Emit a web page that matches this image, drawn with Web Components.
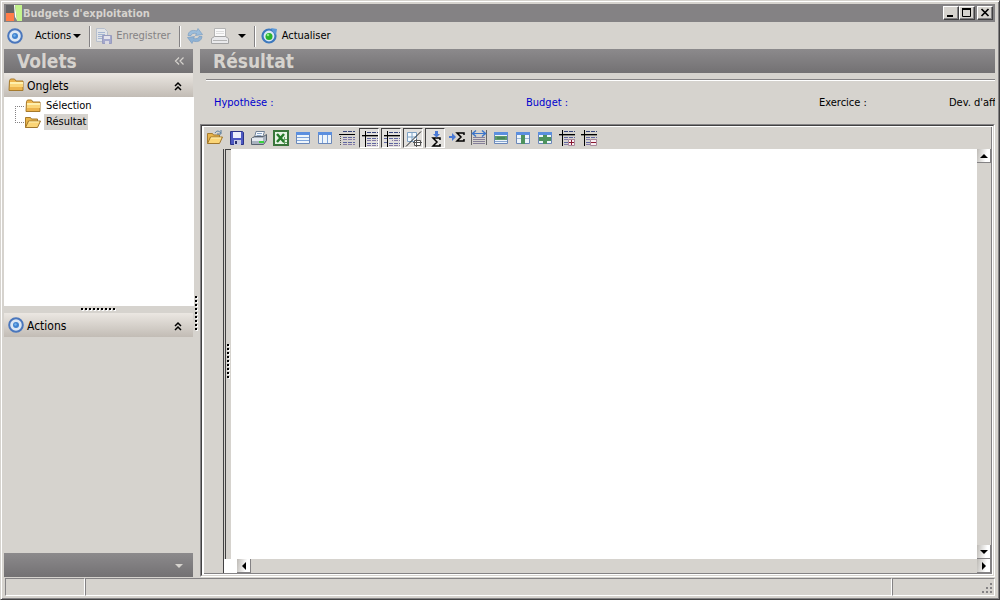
<!DOCTYPE html>
<html lang="fr">
<head>
<meta charset="utf-8">
<title>Budgets d'exploitation</title>
<style>
html, body { margin: 0; height: 100%; }
body { font: 11px/16px "DejaVu Sans Condensed", "DejaVu Sans", sans-serif; color: #000; background: #d6d3ce; overflow: hidden; }
</style>
</head>
<body>
<budget-app></budget-app>
<script>
const target = '<circle cx="8" cy="8" r="6.8" fill="#dce8f4" stroke="#4a76bc" stroke-width="2"/><circle cx="8" cy="8" r="3" fill="#3f82cf"/><circle cx="7.5" cy="7.5" r="1.2" fill="#73b4ec"/>';
const folder = '<path d="M1.500 3.500l1-1.500h4l1.500 2h7v9.500h-14z" fill="#edb44c" stroke="#a67a2c"/><path d="M2 5h13v2H2z" fill="#fff0ad"/><path d="M2 7h13v3H2z" fill="#fbd577"/>';
const openFolder = '<path d="M.5 13.500v-10h5l1 1.500h6v3" fill="#e9b54b" stroke="#a67a2c"/><path d="M.5 13.500l3-6.500h12l-3 6.500z" fill="#fbd577" stroke="#a1762c"/><path d="M4 8h10" stroke="#fff1b5"/>';
const rows = (x, w) => {
  let s = `<path d="M${x} 1.500h${w}" stroke="#39477c" stroke-dasharray="4 1"/>`;
  [7, 9, 12, 14].forEach((y, i) => { s += `<path d="M${x} ${y + .5}h${w}" stroke="${i % 2 ? '#857ba6' : '#5f66a0'}" stroke-dasharray="4 1"/>`; });
  return s;
};
const axes = '<path d="M0 4h16v1H0zM3 0h1v16H3z"/><path d="M0 5h16v1H0z" opacity=".35"/>';
const badge = '<path d="M9.500 9.500h6v6h-6z" fill="#f8eef2" stroke="#a88a9b"/>';
const table = '<path d="M1.500 2.500h13v11h-13z" fill="#eef5fb" stroke="#6a87b8"/><path d="M1 2h14v3H1z" fill="#5b8fdf"/>';
const sigma = (x, y) => `<path d="M${x + 8} ${y + 2}v-2h-7l4 4-4 4h7v-2" fill="none" stroke="#000" stroke-width="1.500"/>`;
const ICONS = {
  logo: '<path d="M0 0h8v8H0z" fill="#646466"/><path d="M0 8h8v8H0z" fill="#ff7d48"/><path d="M8 0h1l2 15-2-3z" fill="#fff"/><path d="M9 0h7v16h-5z" fill="#c4f48c"/>',
  target,
  folder,
  openFolder,
  save: '<path d="M1.500 1.500h12l1 1v12h-13z" fill="#4e59c2" stroke="#2c3488"/><path d="M4 2h8v6H4z" fill="#eef0fb"/><path d="M5 10h7v5H5z" fill="#c8cbe4"/><path d="M6 11h2v3H6z" fill="#29306f"/>',
  saveDoc: '<g opacity=".6"><path d="M.5.500h8l3 3v10H.5z" fill="#e9eef7" stroke="#a4b2cc"/><path d="M2 4.500h7M2 6.500h7M2 8.500h5M2 10.500h4" stroke="#84a2d4"/><path d="M6.500 7.500h9v8h-9z" fill="#838ccc" stroke="#7078b4"/><path d="M8 8h6v3H8z" fill="#eef"/><path d="M9 13h4v3H9z" fill="#dde"/></g>',
  sync: '<path d="M1 7.500C1.500 3 5 1.500 10 3l1-2.500 4.500 6-7 1 1-2C6.500 5 4.500 5.500 4 7.500z" fill="#9cbddb" stroke="#7197c0" stroke-width=".6"/><path d="M15 8.500c-.5 4.500-4 6-9 4.500l-1 2.500-4.500-6 7-1-1 2c3 .5 5 0 5.500-2z" fill="#8fb2d4" stroke="#7197c0" stroke-width=".6"/>',
  printerGray: '<path d="M3.500.500h11v9h-11z" fill="#fafafa" stroke="#b4b4b4"/><path d="M5 3.500h8M5 5.500h8" stroke="#ddd"/><path d="M.5 10.500l3-2h11l3 2v5H.5z" fill="#eaeaec" stroke="#a4a4a4"/><path d="M2 12.500h14" stroke="#b4b4b4"/>',
  refresh: '<circle cx="8" cy="8" r="6.500" fill="#dbe9f4" stroke="#3d78bd" stroke-width="2.200"/><path d="M10 0l6 1-1 6-3-3z" fill="#5c99d8"/><circle cx="8" cy="8.500" r="3.500" fill="#29b32c"/><circle cx="7" cy="7" r="1.300" fill="#8cec83"/>',
  open: openFolder + '<path d="M8 3c2-3 4-2 6 0M14 0v4h-4" fill="none" stroke="#557b9c"/>',
  printer: '<path d="M5 1.500h8.500l-2 6h-8z" fill="#f8fbff" stroke="#708196"/><path d="M6 3.500h5M5.500 5.500h5" stroke="#8ba4c4"/><path d="M.5 8.500l3-2h9l3-2v6l-3 4H.5z" fill="#a9b2bf" stroke="#59636f"/><path d="M1 8h11v3H1z" fill="#e5e9ef"/><path d="M8 11h5v2H8z" fill="#39d23d"/>',
  excel: '<path d="M1 1h14v14H1z" fill="#e7f3e5" stroke="#39753a" stroke-width="2"/><path d="M4 4l7 8M11 4l-7 8" stroke="#267b2a" stroke-width="2.500"/><path d="M10 9.500h4M10 12.500h4M11.500 7v7" stroke="#62a262"/>',
  rowsTable: table + '<path d="M2 7.500h12M2 10.500h12" stroke="#7da4dc"/>',
  colsTable: table + '<path d="M5.500 5v8M10.500 5v8" stroke="#7da4dc"/>',
  grid1: rows(4, 12) + '<path d="M0 4h16v1H0z"/><path d="M1.500 6v9" stroke="#555" stroke-dasharray="1 1"/>',
  grid2: rows(5, 11) + axes,
  grid3: rows(5, 11) + axes + '<path d="M0 7.500h3M0 11.500h3" stroke="#5f66a0"/><path d="M5 9h3v2H5z" fill="#e2e0dd"/>',
  diagonal: '<path d="M1.500 1.500h9v9h-9z" fill="#f4faff" stroke="#7fa2c4"/><path d="M6 2v8M2 6h8" stroke="#7fa2c4"/><path d="M8.500 9.500h6v5h-6z" fill="#fff" stroke="#555"/><path d="M7 11.500h9M10.500 8v8" stroke="#555"/><path d="M0 15.500L15 .5" stroke="#222"/>',
  sumDown: sigma(4, 7) + '<path d="M7 0h3v3h2L8.500 6.500 5 3h2z" fill="#4979d5"/>',
  sumRight: sigma(7, 3) + '<path d="M0 6h3V3l4 4-4 4V8H0z" fill="#4979d5"/>',
  fit: '<path d="M.5 0v15M15.500 0v15" stroke="#666"/><path d="M1 3.500h14" stroke="#3d76ca"/><path d="M5 .5l-3.500 3L5 6.500M11 .5l3.500 3-3.500 3" fill="none" stroke="#3d76ca" stroke-width="1.500"/><path d="M2 7.500h12M2 9.500h12M2 11.500h12M2 13.500h12" stroke="#857f98"/>',
  rowGreen: table + '<path d="M2 6h12v4H2z" fill="#5d9b6c"/><path d="M4 8h8" stroke="#39734a"/><path d="M2 11.500h12" stroke="#89a6d0"/>',
  colGreen: table + '<path d="M6 5h4v9H6z" fill="#4e925e"/><path d="M2 8.500h4M10 8.500h4" stroke="#9bb8d7"/>',
  crossGreen: table + '<path d="M6 5h4v9H6zM2 7h12v4H2z" fill="#4e925e"/>',
  gridPlus: rows(5, 11) + axes + badge + '<path d="M10 12.500h5M12.500 10v5" stroke="#8b1730"/>',
  gridMinus: rows(5, 11) + axes + badge + '<path d="M10 12.500h5" stroke="#8b1730"/>',
  chevUp: '<path d="M5 8l3-3 3 3M5 12l3-3 3 3" fill="none" stroke="#000" stroke-width="1.500"/>',
  chevLeft: '<path d="M8 4.500L4.500 8 8 11.500M12.500 4.500L9 8l3.500 3.500" fill="none" stroke="#d6d3ce" stroke-width="1.200"/>',
  down: '<path d="M4 6h8l-4 4z" fill="currentColor"/>',
  up: '<path d="M4 10h8L8 6z" fill="currentColor"/>',
  left: '<path d="M10 4v8L6 8z" fill="currentColor"/>',
  right: '<path d="M6 4v8l4-4z" fill="currentColor"/>',
  minimize: '<path d="M4 10h6v2H4z"/>',
  maximize: '<path d="M3.500 3.500h8v8h-8z" fill="none" stroke="#000"/><path d="M3 3h9v2H3z"/>',
  close: '<path d="M4.500 4l7 7M11.500 4l-7 7" stroke="#000" stroke-width="1.700"/>',
  grip: '<path d="M12 4h2v2h-2zM8 8h2v2H8zM12 8h2v2h-2zM4 12h2v2H4zM8 12h2v2H8zM12 12h2v2h-2z" fill="#848284"/>'
};
function define(name, css, html) {
  customElements.define(name, class extends HTMLElement {
    constructor() {
      super();
      this.attachShadow({ mode: 'open' }).innerHTML = `<style>*{box-sizing:border-box}:host{display:block;box-sizing:border-box}${css}</style>` + (typeof html === 'function' ? html(this) : html);
    }
  });
}
define('ui-icon', ':host{width:16px;height:16px;flex:none}svg{display:block;width:100%;height:100%;overflow:visible}', el => `<svg viewBox="0 0 ${el.getAttribute('box') || 16} 16" aria-hidden="true">${ICONS[el.getAttribute('name')]}</svg>`);

define('title-bar', `
:host{display:flex;align-items:center;height:18px;flex:none;background:#848284;color:#d6d3ce;padding:0 2px}
h1{font:bold 11px/16px "DejaVu Sans Condensed","DejaVu Sans",sans-serif;margin:0;padding:1px 0 0 1px;flex:1;white-space:nowrap}
button{width:16px;height:14px;padding:0;background:#d6d3ce;border:1px solid;border-color:#fff #424142 #424142 #fff;box-shadow:inset -1px -1px #848284;display:flex;align-items:center;justify-content:center;overflow:hidden}
button:last-child{margin-left:2px}`, `
<ui-icon name="logo"></ui-icon><h1><slot></slot></h1>
<button aria-label="Réduire"><ui-icon name="minimize"></ui-icon></button><button aria-label="Agrandir"><ui-icon name="maximize"></ui-icon></button><button aria-label="Fermer"><ui-icon name="close"></ui-icon></button>`);

define('main-toolbar', `
:host{display:flex;align-items:center;height:27px;flex:none;padding:1px 3px 0}
button{font:inherit;color:inherit;background:none;border:0;padding:0;display:flex;align-items:center;white-space:nowrap}
.actions{gap:12px;padding-right:8px}.save{color:#848284;gap:4px;padding:0 8px 0 5px}.sync{padding:0 8px 0 6px}.refresh{gap:5px;padding-left:5px}
.caret{width:8px;margin-left:-10px;overflow:hidden}.caret ui-icon,.drop ui-icon{margin-left:-4px}.drop{width:8px;overflow:hidden;margin:0 8px 0 9px}
.print ui-icon{width:18px}
hr{width:2px;height:21px;margin:0;border:0;background:linear-gradient(90deg,#848284 50%,#fff 50%)}`, `
<button class="actions"><ui-icon name="target"></ui-icon><span>Actions</span><span class="caret"><ui-icon name="down"></ui-icon></span></button><hr>
<button class="save" disabled><ui-icon name="saveDoc"></ui-icon>Enregistrer</button><hr>
<button class="sync" disabled aria-label="Synchroniser"><ui-icon name="sync"></ui-icon></button>
<button class="print" disabled aria-label="Imprimer"><ui-icon name="printerGray" box="18"></ui-icon></button>
<button class="drop" aria-label="Options d'impression"><ui-icon name="down"></ui-icon></button><hr>
<button class="refresh"><ui-icon name="refresh"></ui-icon>Actualiser</button>`);

define('pane-header', `
:host{display:flex;align-items:center;justify-content:space-between;height:24px;flex:none;padding:0 6px 0 13px;background:linear-gradient(#8c8a8c,#737173);color:#d6d3ce}
h2{margin:0;font:bold 19px/24px "DejaVu Sans Condensed","DejaVu Sans",sans-serif}`, '<h2><slot></slot></h2><slot name="end"></slot>');

define('group-header', `
:host{display:flex;align-items:center;height:24px;flex:none;padding:0 7px 0 4px;background:linear-gradient(#ebe7e2,#c2bcb5);font-size:12px}
span{flex:1;padding:1px 0 0 3px}button{border:0;background:none;padding:1px 0 0}`, el => `<ui-icon name="${el.getAttribute('icon')}"></ui-icon><span><slot></slot></span><button aria-label="Replier"><ui-icon name="chevUp"></ui-icon></button>`);

define('folder-tree', `
:host{background:#fff;min-height:0;overflow:hidden;margin-right:-1px}
ul{list-style:none;margin:0;padding:1px 0 0 11px}
li{display:flex;align-items:center;height:16px}
li::before{content:"";width:10px;height:16px;background:linear-gradient(90deg,#848284 50%,transparent 50%) 0 8px/2px 1px repeat-x,linear-gradient(#848284 50%,transparent 50%) 0 0/1px 2px repeat-y}
li:first-child::before{height:8px;align-self:flex-end;background-position:0 0,0 0}
li:last-child::before{height:9px;align-self:flex-start}
a{display:flex;color:inherit;text-decoration:none}
a span{line-height:16px;padding:0 2px;margin-left:3px}
a[aria-current] span{background:#d6d3ce}`, `
<ul><li><a href="#selection"><ui-icon name="folder"></ui-icon><span>Sélection</span></a></li>
<li><a href="#resultat" aria-current="page"><ui-icon name="openFolder"></ui-icon><span>Résultat</span></a></li></ul>`);

define('drag-grip', `
:host{display:grid;place-items:center;flex:none}
i{width:36px;height:3px;background:repeating-linear-gradient(90deg,#000 0 2px,transparent 2px 4px) 0 0/36px 2px no-repeat,repeating-linear-gradient(90deg,transparent 0 1px,#fff 1px 3px,transparent 3px 4px) 0 1px/36px 2px no-repeat}
:host([vertical]) i{width:3px;height:35px;background:repeating-linear-gradient(#000 0 2px,transparent 2px 4px) 0 0/2px 35px no-repeat,repeating-linear-gradient(transparent 0 1px,#fff 1px 3px,transparent 3px 4px) 1px 0/2px 35px no-repeat}`, '<i></i>');

define('side-pane', `
:host{display:flex;flex-direction:column;width:189px;flex:none}
folder-tree{flex:209 1 0}.rest{flex:216 1 0}drag-grip{height:7px}
footer{height:24px;flex:none;display:flex;align-items:center;justify-content:flex-end;padding:1px 6px 0 0;background:linear-gradient(#8c8a8c,#737173);color:#d6d3ce}`, `
<pane-header>Volets<ui-icon slot="end" name="chevLeft"></ui-icon></pane-header>
<group-header icon="folder">Onglets</group-header><folder-tree></folder-tree><drag-grip></drag-grip>
<group-header icon="target">Actions</group-header><div class="rest"></div><footer><ui-icon name="down"></ui-icon></footer>`);

define('criteria-row', `
:host{border-top:1px solid #848284;box-shadow:inset 0 1px #fff;margin:6px 0 0 6px;padding:15px 0 13px 8px;overflow:hidden}
div{display:grid;grid-template-columns:312fr 293fr 130fr 46fr;white-space:nowrap}
div>*{min-width:0}a{color:#0000ce;text-decoration:none}`, `
<div><a href="#hypothese">Hypothèse :</a><a href="#budget">Budget :</a><span>Exercice :</span><span>Dev. d'aff</span></div>`);

const tools = [['open','Ouvrir'],['save','Enregistrer'],['printer','Imprimer'],['excel','Excel'],['rowsTable','Lignes'],['colsTable','Colonnes'],['grid1','Grille'],['grid2','En-têtes',1],['grid3','Détails',1],['diagonal','Zéros',1],['sumDown','Total colonnes',1],['sumRight','Total lignes'],['fit','Ajuster'],['rowGreen','Ligne'],['colGreen','Colonne'],['crossGreen','Croisement'],['gridPlus','Développer'],['gridMinus','Réduire']];
define('report-toolbar', `
:host{display:flex;height:22px;flex:none;background:#d6d3ce}
button{width:20px;height:20px;margin:1px;padding:0;border:1px solid transparent;background:none;display:grid;place-items:center}
button[aria-pressed=true]{border-color:#424142 #fff #fff #424142;background:#e2e0dd;padding:1px 0 0 1px}`, tools.map(([i, l, p]) => `<button aria-label="${l}" aria-pressed="${!!p}"><ui-icon name="${i}"></ui-icon></button>`).join(''));

define('scroll-bar', `
:host{display:flex;justify-content:space-between;background:#d6d3ce;min-width:0;min-height:0}
:host([vertical]){flex-direction:column}
button{width:14px;height:14px;padding:0;border:0;border-right:1px solid #848284;border-bottom:1px solid #848284;background:linear-gradient(100deg,#bdbab5,#fff 70%);display:flex;align-items:center;justify-content:center;overflow:hidden}`, el => {
  const v = el.hasAttribute('vertical');
  return `<button aria-label="Précédent"><ui-icon name="${v ? 'up' : 'left'}"></ui-icon></button><button aria-label="Suivant"><ui-icon name="${v ? 'down' : 'right'}"></ui-icon></button>`;
});

define('report-view', `
:host{display:flex;flex-direction:column;flex:1;min-height:0;border:1px solid;border-color:#848284 #fff #fff #848284;background:#fff}
.edge{flex:1;min-height:0;display:flex;border:1px solid;border-color:#424142 #d6d3ce #d6d3ce #424142;padding:1px 1px 1px 2px}
.frame{flex:1;min-width:0;min-height:0;display:flex;flex-direction:column;border-right:1px solid #848284;border-bottom:1px solid #848284}
.body{flex:1;min-height:0;display:flex}
.gutter{width:19px;flex:none;background:#d6d3ce}
.sheet{flex:1;min-width:0;display:grid;grid-template:1fr 14px/7px 1fr 14px;border-left:1px solid #424142}
.split{display:flex;background:#d6d3ce;border-left:1px solid #d6d3ce;box-shadow:inset 1px 1px #424142}
.split drag-grip{flex:1;padding:14px 0 0 1px}
.paper{background:#fff}.corner{background:#fff}.h{grid-column:2/4;margin-left:6px}`, `
<div class="edge"><div class="frame"><report-toolbar></report-toolbar><div class="body"><div class="gutter"></div><div class="sheet">
<div class="split"><drag-grip vertical></drag-grip></div><div class="paper"></div><scroll-bar vertical></scroll-bar>
<div class="corner"></div><scroll-bar class="h"></scroll-bar></div></div></div></div>`);

define('result-pane', ':host{display:flex;flex-direction:column;flex:1;min-width:0}', '<pane-header>Résultat</pane-header><criteria-row></criteria-row><report-view></report-view>');

define('status-bar', `
:host{display:flex;height:20px;flex:none;padding:1px 0 1px 1px}
div{border:1px solid;border-color:#848284 #fff #fff #848284}
.a{width:80px}.b{flex:1}.c{width:103px;display:flex;justify-content:flex-end}`, '<div class="a"></div><div class="b"></div><div class="c"><ui-icon name="grip"></ui-icon></div>');

define('budget-app', `
:host{display:flex;flex-direction:column;height:100vh;background:#d6d3ce;border:1px solid;border-color:#d6d3ce #424142 #424142 #d6d3ce;box-shadow:inset 1px 1px #fff,inset -1px -1px #848284;padding:3px 4px 2px 3px}
main{flex:1;min-height:0;display:flex}
main>drag-grip{width:7px}`, `
<title-bar>Budgets d'exploitation</title-bar><main-toolbar></main-toolbar>
<main><side-pane></side-pane><drag-grip vertical></drag-grip><result-pane></result-pane></main><status-bar></status-bar>`);
</script>
</body>
</html>
